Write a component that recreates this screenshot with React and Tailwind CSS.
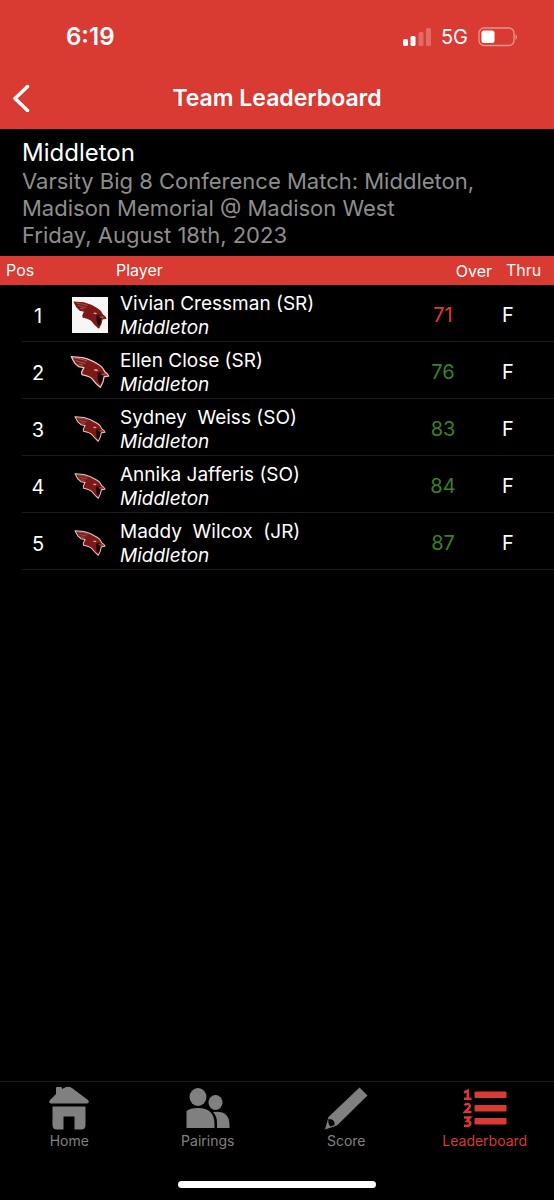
const players = [
  { pos: 1, name: 'Vivian Cressman (SR)', over: 71, thru: 'F', logo: 'framed' },
  { pos: 2, name: 'Ellen Close (SR)', over: 76, thru: 'F', logo: 'large' },
  { pos: 3, name: 'Sydney  Weiss (SO)', over: 83, thru: 'F', logo: 'small' },
  { pos: 4, name: 'Annika Jafferis (SO)', over: 84, thru: 'F', logo: 'small' },
  { pos: 5, name: 'Maddy  Wilcox  (JR)', over: 87, thru: 'F', logo: 'small' },
];

function Cardinal({ className, outline = '#e6c9c6' }) {
  return (
    <svg viewBox="31 30 124 103" className={className} aria-hidden="true">
      <path
        d="M35 34 L70 37 Q99 44 122 60 Q134 67 139 81 Q149 87 151 94 L137 96 Q135 114 125 129 Q110 117 101 104 Q95 96 68 90 L67 82 L74 68 L58 65 L46 54 Z"
        fill="#7c1815"
        stroke={outline}
        strokeWidth="4"
        strokeLinejoin="round"
      />
      <path d="M44 38 L70 43 L84 47 M49 46 L66 52 L80 54 M57 57 L72 60" fill="none" stroke="#b98582" strokeWidth="2" />
      <path d="M117 84 L126 82 L136 85 L140 90 L133 96 Q134 109 125 122 Q116 112 117 98 Z" fill="#160606" />
      <path d="M103 75 L113 79 L119 77 L112 72 Z" fill="#dba9a5" />
      <path d="M124 87 L138 85 L148 93 L133 92 Z" fill="#a84a43" />
    </svg>
  );
}

function TeamLogo({ kind }) {
  if (kind === 'framed') {
    return (
      <span className="mx-auto flex size-9 items-center justify-center bg-[#f6f6f6]">
        <Cardinal className="h-8 w-[34px]" outline="#7c1815" />
      </span>
    );
  }
  return <Cardinal className={kind === 'large' ? 'mx-auto h-9 w-10' : 'mx-auto h-7 w-8'} />;
}

function HomeIcon() {
  return (
    <svg viewBox="0 0 40 44" className="h-11 w-10" fill="currentColor" aria-hidden="true">
      <path d="M7 8 V2 Q7 1 8 1 H12 Q13 1 13 2 V3 L17 1 Q20 0 23 2 L39 14 Q41 17 38 17.500 H2 Q-1 17 1 14 Z" />
      <path d="M3.500 20.500 H36.500 V39 Q36.500 43.500 32 43.500 H25.500 V30.500 H14.500 V43.500 H8 Q3.500 43.500 3.500 39 Z" />
    </svg>
  );
}

function PairingsIcon() {
  return (
    <svg viewBox="0 0 44 44" className="size-11" fill="currentColor" aria-hidden="true">
      <ellipse cx="12" cy="11" rx="8.500" ry="9" />
      <ellipse cx="29.500" cy="16.500" rx="7" ry="7.500" />
      <path d="M0.500 42 V25 Q4 22 12 22 Q28.500 22 28.500 38 V42 Z" />
      <path d="M27 26 Q43.500 24 43.500 39 V42 H31 V37 Q31 30 27 26 Z" />
    </svg>
  );
}

function ScoreIcon() {
  return (
    <svg viewBox="0 0 44 44" className="size-11" aria-hidden="true">
      <path d="M35.500 1.500 L43.500 9.500 L13 39.500 L1 43.500 L4.500 31 Z" fill="currentColor" />
      <path d="M4.500 33 Q3.500 38 6.500 40.500 L10.500 39 Q11 35 8 33.500 Z" fill="#000" />
    </svg>
  );
}

function LeaderboardIcon() {
  return (
    <svg viewBox="0 0 44 44" className="size-11" aria-hidden="true">
      <g fill="currentColor">
        <rect x="11.500" y="5.500" width="32" height="6.500" rx="1" />
        <rect x="11.500" y="19" width="32" height="6.500" rx="1" />
        <rect x="11.500" y="32" width="32" height="6.500" rx="1" />
      </g>
      <g fill="none" stroke="currentColor" strokeWidth="2.500">
        <path d="M1 6.500 L4.800 4.800 V12.800 M1 12.800 H8.500" />
        <path d="M1.500 19.300 Q3 17.500 5 18 Q7.800 19 6 22 L2 26 H8.500" />
        <path d="M1 31.500 H7 L4 35 Q7.800 35 7.300 38 Q6 41 1 39.500" />
      </g>
    </svg>
  );
}

const tabs = [
  { label: 'Home', Icon: HomeIcon },
  { label: 'Pairings', Icon: PairingsIcon },
  { label: 'Score', Icon: ScoreIcon },
  { label: 'Leaderboard', Icon: LeaderboardIcon, active: true },
];

export default function App() {
  return (
    <div className="flex min-h-screen flex-col bg-black font-['Inter','Liberation_Sans',sans-serif] text-white">
      <header className="bg-[#d93a32]">
        <div className="flex h-[74px] items-center justify-between pr-9 pl-[66px]">
          <span className="text-2xl leading-7 font-semibold">6:19</span>
          <div className="flex items-center gap-[10px]">
            <svg viewBox="0 0 28 18" className="h-[18px] w-7" fill="#fff" aria-hidden="true">
              <rect x="0" y="11" width="5" height="7" rx="1.500" />
              <rect x="7.500" y="8" width="5" height="10" rx="1.500" />
              <rect x="15.500" y="4" width="5" height="14" rx="1.500" opacity="0.25" />
              <rect x="23" y="0" width="5" height="18" rx="1.500" opacity="0.25" />
            </svg>
            <span className="text-xl leading-6">5G</span>
            <svg viewBox="0 0 40 20" className="h-5 w-10" aria-hidden="true">
              <rect x="1" y="1" width="35" height="17.500" rx="5" fill="none" stroke="#fff" strokeOpacity="0.45" strokeWidth="1.300" />
              <path d="M37.500 7 Q40.500 10 37.500 13 Z" fill="#fff" opacity="0.5" />
              <rect x="3.500" y="3.500" width="13" height="12.500" rx="2.500" fill="#fff" />
            </svg>
          </div>
        </div>
        <div className="grid h-[55px] grid-cols-[48px_1fr_48px] items-center pb-2">
          <button type="button" aria-label="Back" className="flex h-11 items-center pl-3">
            <svg viewBox="0 0 18 28" className="h-7 w-[18px]" fill="none" stroke="#fff" strokeWidth="3.500" strokeLinecap="round" strokeLinejoin="round" aria-hidden="true">
              <path d="M15.500 2.500 L3 14.500 L15.500 26.500" />
            </svg>
          </button>
          <h1 className="text-center text-[23px] leading-7 font-semibold">Team Leaderboard</h1>
        </div>
      </header>

      <main className="flex-1">
        <section className="px-[22px] pt-2 pb-[7px]">
          <h2 className="text-2xl leading-[31px]">Middleton</h2>
          <p className="max-w-[480px] text-[22px] leading-[27px] text-[#8e8e8e]">
            Varsity Big 8 Conference Match: Middleton, Madison Memorial @ Madison West
          </p>
          <p className="text-[22px] leading-[27px] text-[#8e8e8e]">Friday, August 18th, 2023</p>
        </section>

        <table className="w-full table-fixed border-separate border-spacing-0">
          <colgroup>
            <col className="w-[60px]" />
            <col className="w-[60px]" />
            <col />
            <col className="w-[110px]" />
            <col className="w-[56px]" />
          </colgroup>
          <thead>
            <tr className="h-[29px] bg-[#d93a32] text-left text-base leading-5">
              <th scope="col" className="p-0 pb-0.5 pl-[6px] font-normal">Pos</th>
              <th scope="col" colSpan={2} className="p-0 pb-0.5 pl-14 font-normal">Player</th>
              <th scope="col" className="p-0 pr-[6px] text-right font-normal">Over</th>
              <th scope="col" className="p-0 pb-0.5 pl-2 font-normal">Thru</th>
            </tr>
          </thead>
          <tbody>
            {players.map((p) => (
              <tr key={p.pos} className="h-[57px] text-xl leading-6">
                <td className="relative p-0 pt-1 pl-4 text-center after:absolute after:right-0 after:bottom-0 after:left-[22px] after:h-px after:bg-[#1c1c1c]">{p.pos}</td>
                <td className="border-b border-[#1c1c1c] p-0 pt-1">
                  <TeamLogo kind={p.logo} />
                </td>
                <td className="border-b border-[#1c1c1c] p-0 pt-[6px] text-[19px]">
                  <div className="whitespace-pre">{p.name}</div>
                  <div className="italic">Middleton</div>
                </td>
                <td className={`border-b border-[#1c1c1c] p-0 pt-1 text-center ${p.over < 72 ? 'text-[#e03c34]' : 'text-[#3c8127]'}`}>{p.over}</td>
                <td className="border-b border-[#1c1c1c] p-0 pt-1 pl-1">{p.thru}</td>
              </tr>
            ))}
          </tbody>
        </table>
      </main>

      <footer className="border-t border-[#1c1c1c] pt-1">
        <nav className="grid grid-cols-4">
          {tabs.map(({ label, Icon, active }) => (
            <a
              key={label}
              href={`#${label.toLowerCase()}`}
              aria-current={active ? 'page' : undefined}
              className={`flex flex-col items-center gap-px text-sm ${active ? 'text-[#d93a32]' : 'text-[#808080]'}`}
            >
              <Icon />
              <span>{label}</span>
            </a>
          ))}
        </nav>
        <div className="flex justify-center pt-[30px] pb-3">
          <div className="h-[7px] w-[198px] rounded-full bg-white" />
        </div>
      </footer>
    </div>
  );
}
